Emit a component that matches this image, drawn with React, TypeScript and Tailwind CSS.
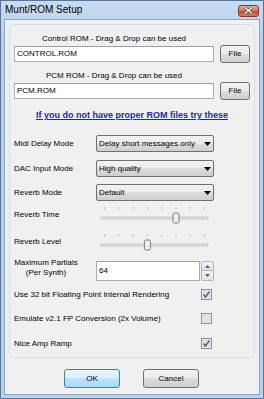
const font = "font-['Liberation_Sans',Arial,sans-serif]";

function TextBox({ value, width, height }: { value: string; width: number; height: number }) {
	return (
		<div
			className="flex items-center border border-[#abadb3] border-t-[#9aa0aa] bg-white pl-[2px] text-[8px] leading-[10px] text-black"
			style={{ width, height }}
		>
			{value}
		</div>
	);
}

function PushButton({ label, width, height, isDefault }: { label: string; width: number; height: number; isDefault?: boolean }) {
	return (
		<div
			className={
				isDefault
					? "flex items-center justify-center rounded-[3px] border border-[#3c7fb1] bg-[linear-gradient(#eaf6fd_0%,#d9f0fc_50%,#bee6fd_50%,#a7d9f5_100%)] text-[8px] text-black"
					: "flex items-center justify-center rounded-[3px] border border-[#707070] bg-[linear-gradient(#f2f2f2_0%,#ebebeb_50%,#dddddd_50%,#cfcfcf_100%)] text-[8px] text-black"
			}
			style={{ width, height }}
		>
			{label}
		</div>
	);
}

function Combo({ value }: { value: string }) {
	return (
		<div className="flex h-[17px] w-[118px] items-center justify-between rounded-[2px] border border-[#707070] bg-[linear-gradient(#f2f2f2_0%,#ebebeb_50%,#dddddd_50%,#cfcfcf_100%)] pl-[2px] pr-[2px] text-[8px] text-black">
			<span>{value}</span>
			<svg width="7" height="4" viewBox="0 0 7 4">
				<polygon points="0,0 7,0 3.5,4" fill="#000" />
			</svg>
		</div>
	);
}

function Slider({ pos }: { pos: number }) {
	const ticks = [0, 1, 2, 3, 4, 5, 6, 7];
	const x = (i: number) => 8.5 + i * 14.3;
	return (
		<svg width="118" height="20" viewBox="0 0 118 20">
			{ticks.map((t) => (
				<line key={t} x1={x(t)} y1="3" x2={x(t)} y2="5.5" stroke="#b8b8b8" strokeWidth="1" />
			))}
			<rect x="5" y="13" width="107" height="2" fill="#e6e6e6" stroke="#b0b0b0" strokeWidth="0.6" />
			<rect x={x(pos) - 3} y="9" width="6" height="10" rx="1.5" fill="#f0f0f0" stroke="#7a7a7a" strokeWidth="1" />
		</svg>
	);
}

function Check({ checked }: { checked: boolean }) {
	return (
		<svg width="11" height="11" viewBox="0 0 11 11">
			<rect x="0.5" y="0.5" width="10" height="10" fill="#f6f6f6" stroke="#8e8f8f" />
			<rect x="2" y="2" width="7" height="7" fill="#e4e4e4" stroke="#c8c8c8" strokeWidth="0.6" />
			{checked && <path d="M2.5 5.5 L4.5 8 L8.5 2.5" fill="none" stroke="#4a5c9c" strokeWidth="1.4" />}
		</svg>
	);
}

function Row({ label, children }: { label: string; children: React.ReactNode }) {
	return (
		<div className="flex items-center">
			<div className="w-[82px] text-[8px] leading-[10px] text-black">{label}</div>
			{children}
		</div>
	);
}

function CheckRow({ label, checked, mt }: { label: string; checked: boolean; mt: string }) {
	return (
		<div className={`${mt} flex w-[198px] items-center justify-between text-[8px] leading-[10px] text-black`}>
			<span>{label}</span>
			<Check checked={checked} />
		</div>
	);
}

export default function App() {
	return (
		<div className={`${font} flex h-[399px] w-[264px] flex-col border border-[#57769c] bg-[linear-gradient(#c7dbf1,#b9d1ea_40px,#b9d1ea)]`}>
			<div className="flex h-[18px] items-center justify-between pl-[4px] pr-[4px]">
				<span className="text-[10px] leading-[12px] text-black">Munt/ROM Setup</span>
				<div className="mt-[1px] flex h-[12px] w-[21px] items-center justify-center rounded-[3px] border border-[#7a3c36] bg-[linear-gradient(#e9a99b,#d2735f_50%,#c24a35_50%,#d47a5e)]">
					<svg width="9" height="7" viewBox="0 0 9 7">
						<path d="M1 0.5 L8 6.5 M8 0.5 L1 6.5" stroke="#5b2a24" strokeWidth="2.6" />
						<path d="M1 0.5 L8 6.5 M8 0.5 L1 6.5" stroke="#fff" strokeWidth="1.5" />
					</svg>
				</div>
			</div>
			<div className="mx-[3px] mb-[3px] flex flex-1 flex-col border border-[#8ea6c4] bg-[#f0f0f0]">
				<div className="mx-[4px] mt-[4px] flex h-[334px] flex-col rounded-[3px] border border-[#d5dfe5] pl-[4px]">
					<div className="mt-[9px] w-[200px] text-center text-[8px] leading-[10px] text-black">Control ROM - Drag &amp; Drop can be used</div>
					<div className="mt-[1px] flex items-start">
						<div className="mt-[1px]">
							<TextBox value="CONTROL.ROM" width={200} height={16} />
						</div>
						<div className="ml-[6px]">
							<PushButton label="File" width={30} height={18} />
						</div>
					</div>
					<div className="mt-[8px] w-[200px] text-center text-[8px] leading-[10px] text-black">PCM ROM - Drag &amp; Drop can be used</div>
					<div className="mt-[1px] flex items-start">
						<div className="mt-[1px]">
							<TextBox value="PCM.ROM" width={200} height={16} />
						</div>
						<div className="ml-[6px]">
							<PushButton label="File" width={30} height={18} />
						</div>
					</div>
					<div className="mt-[10px] -ml-[4px] text-center text-[9px] font-bold leading-[11px] text-[#1a29a8] underline">
						If you do not have proper ROM files try these
					</div>
					<div className="mt-[14px]">
						<Row label="Midi Delay Mode">
							<Combo value="Delay short messages only" />
						</Row>
					</div>
					<div className="mt-[8px]">
						<Row label="DAC Input Mode">
							<Combo value="High quality" />
						</Row>
					</div>
					<div className="mt-[7px]">
						<Row label="Reverb Mode">
							<Combo value="Default" />
						</Row>
					</div>
					<div className="mt-[3px] flex items-end">
						<div className="mb-[4px] w-[82px] text-[8px] leading-[10px] text-black">Reverb Time</div>
						<Slider pos={5} />
					</div>
					<div className="mt-[7px] flex items-end">
						<div className="mb-[4px] w-[82px] text-[8px] leading-[10px] text-black">Reverb Level</div>
						<Slider pos={3} />
					</div>
					<div className="mt-[7px] flex items-start">
						<div className="w-[82px] text-[8px] leading-[10px] text-black">
							<div className="w-[64px] text-center">Maximum Partials</div>
							<div className="w-[64px] text-center">(Per Synth)</div>
						</div>
						<div className="mt-[3px] flex">
							<TextBox value="64" width={104} height={20} />
							<div className="ml-[1px] flex flex-col">
								<div className="flex h-[10px] w-[13px] items-center justify-center rounded-t-[2px] border border-[#b5b5b5] bg-[linear-gradient(#f5f5f5,#e2e2e2)]">
									<svg width="5" height="3" viewBox="0 0 5 3">
										<polygon points="0,3 5,3 2.5,0" fill="#4d6185" />
									</svg>
								</div>
								<div className="flex h-[10px] w-[13px] items-center justify-center rounded-b-[2px] border border-t-0 border-[#b5b5b5] bg-[linear-gradient(#f5f5f5,#e2e2e2)]">
									<svg width="5" height="3" viewBox="0 0 5 3">
										<polygon points="0,0 5,0 2.5,3" fill="#4d6185" />
									</svg>
								</div>
							</div>
						</div>
					</div>
					<CheckRow mt="mt-[8px]" label="Use 32 bit Floating Point Internal Rendering" checked={true} />
					<CheckRow mt="mt-[13px]" label="Emulate v2.1 FP Conversion (2x Volume)" checked={false} />
					<CheckRow mt="mt-[14px]" label="Nice Amp Ramp" checked={true} />
				</div>
				<div className="mt-[11px] flex">
					<div className="ml-[59px]">
						<PushButton label="OK" width={56} height={19} isDefault />
					</div>
					<div className="ml-[23px]">
						<PushButton label="Cancel" width={56} height={19} />
					</div>
				</div>
			</div>
		</div>
	);
}
